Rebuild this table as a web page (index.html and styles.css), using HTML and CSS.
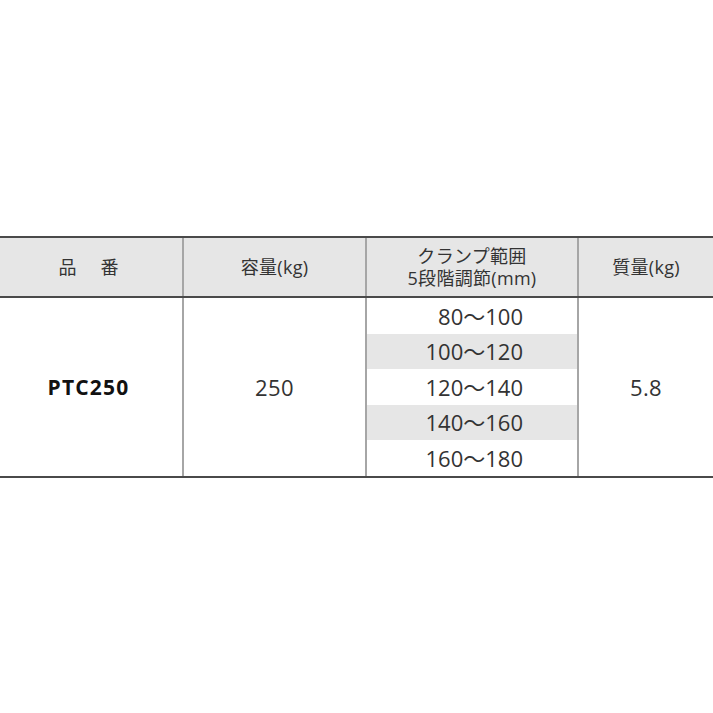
FILE: index.html
```html
<!DOCTYPE html>
<html lang="ja">
<head>
<meta charset="utf-8">
<link rel="stylesheet" href="styles.css">
</head>
<body>
<div class="page">
  <table class="spec">
    <colgroup>
      <col class="c1"><col class="c2"><col class="c3"><col class="c4">
    </colgroup>
    <thead>
      <tr>
        <th class="hinban">品　番</th>
        <th>容量(kg)</th>
        <th>クランプ範囲<br>5段階調節(mm)</th>
        <th>質量(kg)</th>
      </tr>
    </thead>
    <tbody>
      <tr class="r-tall">
        <td rowspan="5" class="model">PTC250</td>
        <td rowspan="5" class="num">250</td>
        <td class="range">80～100</td>
        <td rowspan="5" class="num">5.8</td>
      </tr>
      <tr class="r-short"><td class="range alt">100～120</td></tr>
      <tr class="r-tall"><td class="range">120～140</td></tr>
      <tr class="r-short"><td class="range alt">140～160</td></tr>
      <tr class="r-tall"><td class="range">160～180</td></tr>
    </tbody>
  </table>
</div>
</body>
</html>
```
FILE: styles.css
```css
html, body {
  margin: 0;
  padding: 0;
  background: #ffffff;
}
.page {
  padding-top: 236px;
  font-family: "Open Sans", "Noto Sans CJK JP", sans-serif;
}
.spec {
  width: 713px;
  border-collapse: collapse;
  table-layout: fixed;
  color: #2a2a2a;
}
.c1 { width: 183px; }
.c2 { width: 183px; }
.c3 { width: 212px; }
.c4 { width: 135px; }
.spec th {
  background: #e6e6e6;
  height: 58px;
  padding: 0;
  font-weight: normal;
  font-size: 18px;
  line-height: 22px;
  letter-spacing: 0.3px;
  color: #333;
  border-top: 2px solid #4a4a4a;
  border-bottom: 2px solid #4a4a4a;
  border-left: 2px solid #a6a6a6;
  text-align: center;
  vertical-align: middle;
}
.spec th:first-child { border-left: none; }
.spec th.hinban { letter-spacing: 3px; padding-right: 2px; }
.spec td {
  padding: 0;
  text-align: center;
  vertical-align: middle;
  border-left: 2px solid #a6a6a6;
  font-size: 22px;
  letter-spacing: 0.4px;
  color: #333;
}
.spec td.model {
  border-left: none;
  font-weight: bold;
  color: #111;
  font-size: 21px;
  letter-spacing: 1.2px;
  padding-right: 5px;
}
.spec tbody tr:last-child td,
.spec td.model,
.spec td.num { border-bottom: 2px solid #4a4a4a; }
.spec td.range {
  text-align: right;
  padding-right: 54px;
  padding-bottom: 3px;
  letter-spacing: 0;
}
.spec tr.r-tall td.range { height: 33px; }
.spec tr.r-short td.range { height: 32px; }
.spec td.alt { background: #e6e6e6; }
```
